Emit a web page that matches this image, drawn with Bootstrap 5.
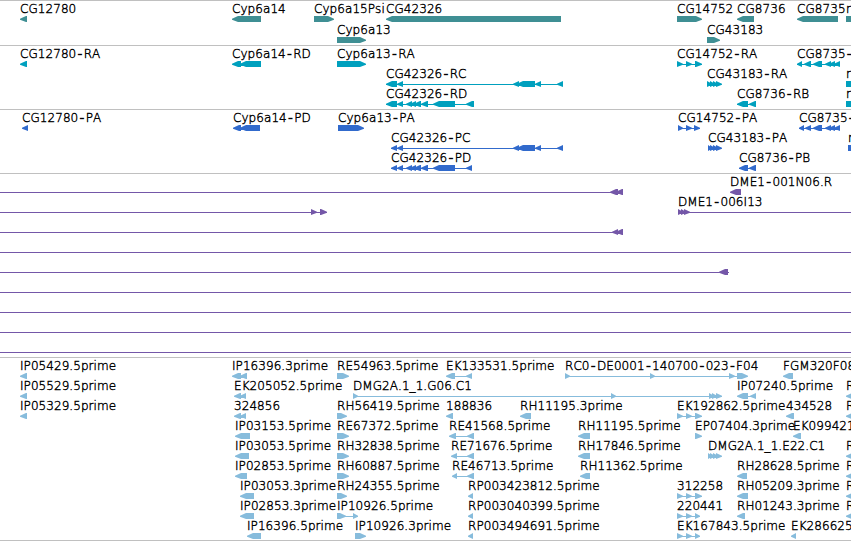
<!DOCTYPE html>
<html lang="en">
<head>
    <meta charset="UTF-8">
    <meta name="viewport" content="width=device-width, initial-scale=1.0">
    <title>Genome Browser</title>
    <link href="https://cdn.jsdelivr.net/npm/bootstrap@5.3.0/dist/css/bootstrap.min.css" rel="stylesheet">
    <style>
        body {
            font-family: 'DejaVu Sans Light', 'DejaVu Sans', sans-serif;
            background: #fff;
        }
        .browser {
            width: 851px;
            height: 541px;
            border-bottom: 1px solid #c0c0c0;
        }
        .track {
            border-top: 1px solid #c0c0c0;
        }
        .track-gene { height: 45px; color: #3f8f94; }
        .track-mrna { height: 64px; color: #00a0be; }
        .track-cds { height: 64px; color: #316acc; }
        .track-bac { height: 184px; color: #7457a8; }
        .track-est { height: 183px; color: #87bcdc; }
        .lane {
            display: block;
            flex: none;
            width: 851px;
            height: 20px;
            overflow: visible;
        }
        .track-gene .lane { height: 21px; }
        .lane text {
            font-size: 12px;
            font-weight: 200;
            font-kerning: none;
            letter-spacing: .06px;
            fill: #000;
            stroke: #000;
            stroke-width: .4px;
        }
        .lane path {
            fill: currentColor;
        }
    </style>
</head>
<body>

<div class="browser d-flex flex-column overflow-hidden">
    <div class="track track-gene d-flex flex-column" id="gene"></div>
    <div class="track track-mrna d-flex flex-column" id="mrna"></div>
    <div class="track track-cds d-flex flex-column" id="cds"></div>
    <div class="track track-bac d-flex flex-column" id="bac"></div>
    <div class="track track-est d-flex flex-column" id="est"></div>
</div>

<script src="https://cdn.jsdelivr.net/npm/bootstrap@5.3.0/dist/js/bootstrap.bundle.min.js"></script>
<script>
    // One array per lane, one [label, x, parts] per feature.
    // Parts: <a,b reverse exon, >a,b forward exon, =a,b box, -a,b intron line
    const tracks = {
        gene: [
            [['CG12780', 20, '<20,27'], ['Cyp6a14', 232, '<232,261'], ['Cyp6a15Psi', 314, '>314,334'],
             ['CG42326', 386, '<386,561'], ['CG14752', 677, '>677,702'], ['CG8736', 737, '<737,754'],
             ['CG8735', 797, '<797,838'], ['r', 846, '=846,851']],
            [['Cyp6a13', 337, '>337,366'], ['CG43183', 707, '>707,720']]
        ],
        mrna: [
            [['CG12780-RA', 20, '<20,27'], ['Cyp6a14-RD', 232, '<232,241 <240,261'], ['Cyp6a13-RA', 337, '>337,366'],
             ['CG14752-RA', 677, '-677,702 >677,683 >686,692 >695,702'],
             ['CG8735-', 797, '-797,840 <797,802 <804,811 <813,822 <825,831 <829,835 <834,840']],
            [['CG42326-RC', 386, '-386,563 <386,397 <397,403 <513,519 <517,535 <535,541 <557,563'],
             ['CG43183-RA', 707, '>707,712 >710,715 >713,718 >716,722'], ['r', 846, '=846,851']],
            [['CG42326-RD', 386, '-386,474 <386,397 <397,403 <406,412 <410,416 <414,421 <421,428 <433,455 <466,474'],
             ['CG8736-RB', 737, '-737,756 <737,748 <749,756'], ['r', 846, '=846,851']]
        ],
        cds: [
            [['CG12780-PA', 22, '<22,28'], ['Cyp6a14-PD', 233, '<233,241 <240,260'], ['Cyp6a13-PA', 338, '>338,364'],
             ['CG14752-PA', 678, '-678,700 >678,683 >686,692 >694,700'],
             ['CG8735-', 799, '-799,840 <799,804 <805,811 <813,822 <825,831 <829,835 <834,840']],
            [['CG42326-PC', 391, '-391,563 <391,397 <397,403 <513,519 <517,535 <535,541 <557,563'],
             ['CG43183-PA', 708, '>708,712 >710,715 >713,718 >716,722'], ['r', 848, '=848,851']],
            [['CG42326-PD', 391, '-391,472 <391,397 <397,403 <406,412 <410,416 <414,421 <421,428 <433,455 <466,472'],
             ['CG8736-PB', 739, '-739,756 <739,748 <749,756']]
        ],
        bac: [
            [['', 0, '-0,616 <610,618 <616,623'], ['DME1-001N06.R', 730, '<730,741']],
            [['', 0, '-0,327 >311,317 >320,327'], ['DME1-006I13', 678, '-678,851 >678,683 >681,686 >684,690']],
            [['', 0, '-0,623 <612,618 <616,623']],
            [['', 0, '-0,851']],
            [['', 0, '-0,729 <719,728']],
            [['', 0, '-0,851']],
            [['', 0, '-0,851']],
            [['', 0, '-0,851']],
            [['', 0, '-0,851']]
        ],
        est: [
            [['IP05429.5prime', 20, '<20,27'], ['IP16396.3prime', 232, '<232,241 <240,247'], ['RE54963.5prime', 337, '>337,349'],
             ['EK133531.5prime', 446, '-446,472 <446,455 <466,472'],
             ['RC0-DE0001-140700-023-F04', 565, '-565,740 >565,570 >650,655 >729,735 >737,748'],
             ['FGM320F08', 783, '<783,793']],
            [['IP05529.5prime', 20, '<20,27'], ['EK205052.5prime', 234, '<234,241 <240,246'],
             ['DMG2A.1_1.G06.C1', 353, '-353,722 >353,358 >611,616 >709,714 >712,717 >716,722'],
             ['IP07240.5prime', 737, '-737,756 <737,748 <750,756'], ['R', 846, '<846,852']],
            [['IP05329.5prime', 20, '<20,27'], ['324856', 234, '<234,241 <240,246'], ['RH56419.5prime', 337, '>337,347'],
             ['188836', 446, '<446,453'], ['RH11195.3prime', 520, '<520,531'],
             ['EK192862.5prime', 677, '-677,702 >677,683 >686,692 >695,702'], ['434528', 786, '<786,794'], ['R', 846, '<846,852']],
            [['IP03153.5prime', 235, '<235,250'], ['RE67372.5prime', 337, '>337,349'],
             ['RE41568.5prime', 449, '-449,474 <449,456 <467,474'], ['RH11195.5prime', 578, '<578,590'],
             ['EP07404.3prime', 695, '>695,702'], ['EK099421', 793, '<793,801']],
            [['IP03053.5prime', 235, '<235,249'], ['RH32838.5prime', 337, '>337,349'],
             ['RE71676.5prime', 451, '-451,474 <451,457 <467,474'], ['RH17846.5prime', 578, '<578,590'],
             ['DMG2A.1_1.E22.C1', 708, '>708,712 >710,715 >713,718 >716,722'], ['R', 846, '<846,852']],
            [['IP02853.5prime', 235, '<235,247'], ['RH60887.5prime', 337, '>337,349'],
             ['RE46713.5prime', 452, '-452,474 <452,457 <467,474'], ['RH11362.5prime', 580, '<580,590'],
             ['RH28628.5prime', 737, '<737,747'], ['R', 846, '<846,852']],
            [['IP03053.3prime', 240, '<240,254'], ['RH24355.5prime', 337, '>337,347'], ['RP003423812.5prime', 468, '<468,473'],
             ['312258', 677, '-677,702 >677,683 >686,692 >695,702'], ['RH05209.3prime', 737, '<737,748'], ['R', 846, '<846,852']],
            [['IP02853.3prime', 240, '<240,254'], ['IP10926.5prime', 337, '-337,358 >337,346 >353,358'],
             ['RP003040399.5prime', 468, '<468,473'], ['220441', 677, '-677,700 >677,683 >686,692 >695,700'],
             ['RH01243.3prime', 737, '<737,745'], ['R', 846, '<846,852']],
            [['IP16396.5prime', 247, '<247,261'], ['IP10926.3prime', 355, '>355,366'], ['RP003494691.5prime', 468, '<468,473'],
             ['EK167843.5prime', 677, '-677,700 >677,683 >686,692 >695,700'], ['EK286625', 791, '<791,796']]
        ]
    };

    // All parts wind clockwise so overlapping ones merge
    function partPath(part) {
        const [a, b] = part.slice(1).split(',').map(Number);
        const head = Math.min(6, b - a);
        switch (part[0]) {
            case '-': return `M${a} 18H${b}V19H${a}Z`;
            case '=': return `M${a} 15H${b}V21H${a}Z`;
            case '<': return `M${a} 17.7L${a + head} 15H${b}V21H${a + head}L${a} 18.8Z`;
            default: return `M${a} 15H${b - head}L${b} 17.7V18.8L${b - head} 21H${a}Z`;
        }
    }

    // Hyphens get a little room on both sides
    function labelText(label, x) {
        const parts = label.split('-');
        let html = parts[0];
        for (let i = 1; i < parts.length; i++) {
            html += `<tspan dx="1.5" stroke-width=".9">-</tspan><tspan dx="1.5">${parts[i]}</tspan>`;
        }
        return `<text x="${x}" y="12">${html}</text>`;
    }

    for (const id in tracks) {
        document.getElementById(id).innerHTML = tracks[id].map(lane => {
            const shapes = lane.map(f => f[2].split(' ').map(partPath).join('')).join('');
            const labels = lane.filter(f => f[0]).map(f => labelText(f[0], f[1])).join('');
            return `<svg class="lane"><path d="${shapes}"/>${labels}</svg>`;
        }).join('');
    }
</script>
</body>
</html>
